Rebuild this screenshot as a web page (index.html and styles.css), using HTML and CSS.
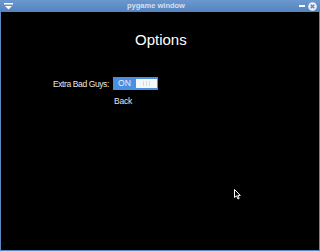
FILE: index.html
```html
<!DOCTYPE html>
<html>
<head>
<meta charset="utf-8">
<link rel="stylesheet" href="styles.css">
</head>
<body>
<div class="window">
  <div class="titlebar">
    <span class="menu-btn">
      <svg width="9" height="7" viewBox="0 0 9 7"><rect x="0" y="0" width="9" height="1.5" fill="#fff"/><path d="M1 3 H8 L4.5 6.5 Z" fill="#fff"/></svg>
    </span>
    <span class="title">pygame window</span>
    <span class="ctrls">
      <span class="min"></span>
      <svg width="9" height="9" viewBox="0 0 9 9"><circle cx="4.5" cy="4.5" r="4.3" fill="#eef2f8"/><path d="M2.7 2.7 L6.3 6.3 M6.3 2.7 L2.7 6.3" stroke="#5a86bd" stroke-width="1.4"/></svg>
    </span>
  </div>
  <div class="canvas">
    <h1 class="heading">Options</h1>
    <div class="row">
      <span class="label">Extra Bad Guys:</span>
      <div class="toggle">
        <span class="on">ON</span>
        <span class="knob"><i></i><i></i><i></i></span>
      </div>
    </div>
    <div class="back">Back</div>
    <svg class="cursor" width="7" height="11" viewBox="0 0 7 11"><path d="M0.5 0.5 L0.5 8.5 L2.5 6.8 L4 10 L5.2 9.4 L3.8 6.4 L6.3 6.4 Z" fill="#000" stroke="#fff" stroke-width="1"/></svg>
  </div>
</div>
</body>
</html>
```
FILE: styles.css
```css
html, body {
  margin: 0;
  padding: 0;
  background: #000;
}
.window {
  width: 320px;
  height: 251px;
  box-sizing: border-box;
  display: flex;
  flex-direction: column;
  background: #5b8ac4;
  font-family: "Liberation Sans", Arial, sans-serif;
}
.titlebar {
  height: 12px;
  flex: none;
  display: flex;
  align-items: center;
  padding: 0 3px 0 4px;
  background: linear-gradient(#6b98cf, #5483bf);
  color: #e8eef7;
}
.menu-btn {
  display: flex;
  width: 9px;
  height: 7px;
}
.title {
  flex: 1;
  text-align: center;
  font-size: 7.5px;
  font-weight: bold;
  line-height: 12px;
  color: #d6e0ee;
}
.ctrls {
  display: flex;
  align-items: center;
  gap: 3px;
}
.min {
  width: 6px;
  height: 1.5px;
  background: #fff;
}
.canvas {
  flex: 1;
  margin: 0 1px 1px 1px;
  background: #000;
  position: relative;
  color: #fff;
}
.heading {
  margin: 0;
  padding-top: 19px;
  padding-left: 134px;
  font-size: 15px;
  font-weight: normal;
  line-height: 17px;
  color: #fff;
}
.row {
  display: flex;
  align-items: center;
  margin-top: 29px;
  padding-left: 52px;
  gap: 4px;
}
.label {
  font-size: 8.5px;
  color: #e8e8e8;
  letter-spacing: -0.4px;
}
.toggle {
  display: flex;
  align-items: center;
  width: 45px;
  height: 13px;
  box-sizing: border-box;
  background: #4a90e2;
  padding: 2px 1px 2px 0;
}
.on {
  width: 23px;
  text-align: center;
  font-size: 8.5px;
  color: #e6f0fb;
  line-height: 9px;
}
.knob {
  flex: 1;
  height: 9px;
  background: #f6f7f8;
  display: flex;
  justify-content: center;
  align-items: center;
  gap: 2px;
}
.knob i {
  width: 1px;
  height: 5px;
  background: #d9dbde;
}
.back {
  margin-top: 6px;
  padding-left: 113px;
  font-size: 8.5px;
  color: #e8e8e8;
  letter-spacing: -0.2px;
}
.cursor {
  position: absolute;
  left: 233px;
  top: 177px;
}
```
